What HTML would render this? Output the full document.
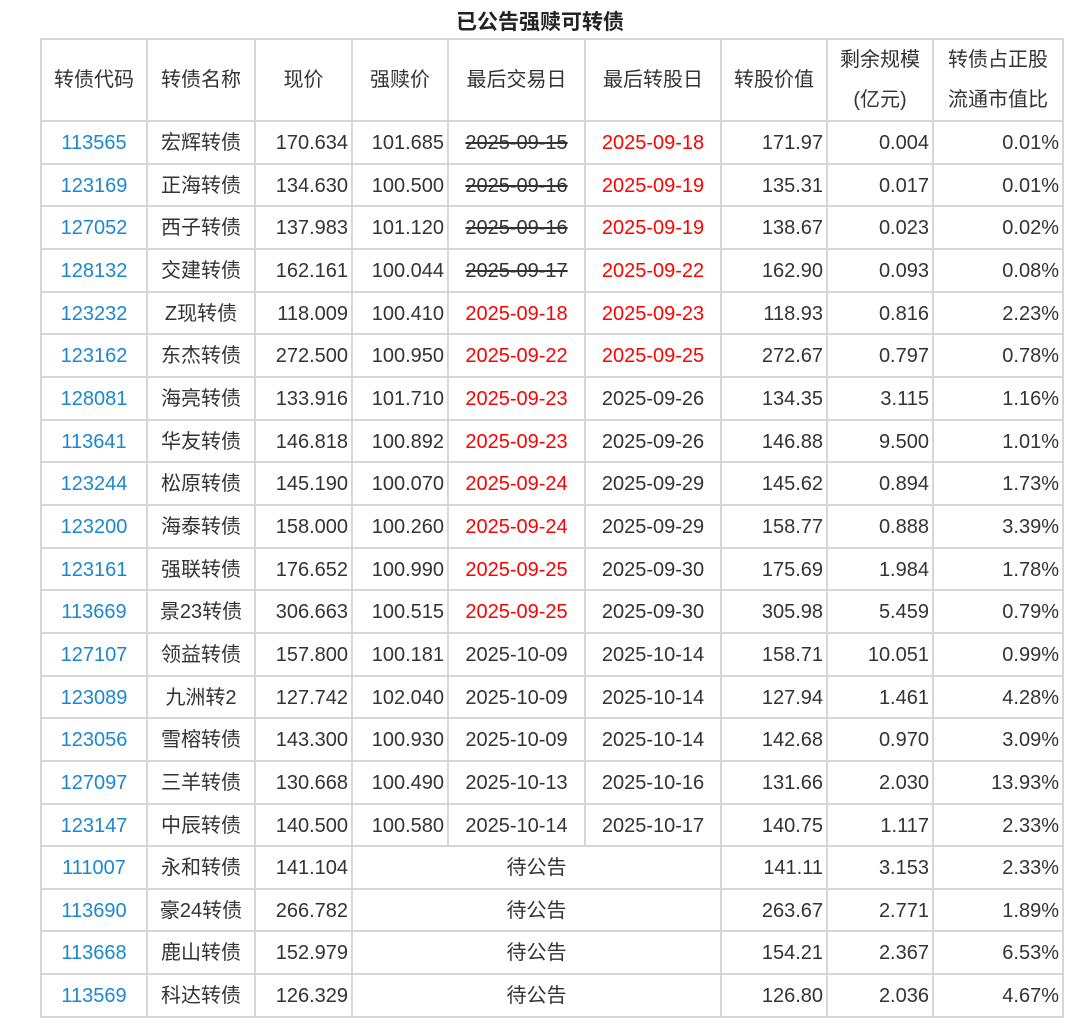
<!DOCTYPE html>
<html><head><meta charset="utf-8"><style>
body{margin:0;background:#fff;width:1080px;height:1024px;overflow:hidden;font-family:"Liberation Sans","Noto Sans CJK SC",sans-serif;color:#333}
h1{position:absolute;top:6px;left:0;width:1080px;text-align:center;margin:0;font-size:21px;font-weight:bold;color:#222}
table{position:absolute;left:40px;top:38px;border-collapse:collapse;table-layout:fixed;font-size:20px}
td,th{border:2px solid #d6d6d6;padding:0 3px;white-space:nowrap;line-height:24px}
tr{height:42.67px}
tr.h{height:80px}
th{font-weight:normal;line-height:40px;text-align:center;vertical-align:middle}
td{text-align:right;vertical-align:baseline;padding-top:9px;padding-bottom:0}
td.c{text-align:center}
.b{color:#1a88d0;text-align:center}
.r{color:#f00;text-align:center}
s{color:#333}
</style></head><body>
<h1>已公告强赎可转债</h1>
<table>
<colgroup><col style="width:106px"><col style="width:108px"><col style="width:97px"><col style="width:96px"><col style="width:137px"><col style="width:136px"><col style="width:106px"><col style="width:106px"><col style="width:130px"></colgroup>
<tr class="h"><th>转债代码</th><th>转债名称</th><th>现价</th><th>强赎价</th><th>最后交易日</th><th>最后转股日</th><th>转股价值</th><th>剩余规模<br>(亿元)</th><th>转债占正股<br>流通市值比</th></tr>
<tr><td class="b">113565</td><td class="c">宏辉转债</td><td>170.634</td><td>101.685</td><td class="c"><s>2025-09-15</s></td><td class="r">2025-09-18</td><td>171.97</td><td>0.004</td><td>0.01%</td></tr>
<tr><td class="b">123169</td><td class="c">正海转债</td><td>134.630</td><td>100.500</td><td class="c"><s>2025-09-16</s></td><td class="r">2025-09-19</td><td>135.31</td><td>0.017</td><td>0.01%</td></tr>
<tr><td class="b">127052</td><td class="c">西子转债</td><td>137.983</td><td>101.120</td><td class="c"><s>2025-09-16</s></td><td class="r">2025-09-19</td><td>138.67</td><td>0.023</td><td>0.02%</td></tr>
<tr><td class="b">128132</td><td class="c">交建转债</td><td>162.161</td><td>100.044</td><td class="c"><s>2025-09-17</s></td><td class="r">2025-09-22</td><td>162.90</td><td>0.093</td><td>0.08%</td></tr>
<tr><td class="b">123232</td><td class="c">Z现转债</td><td>118.009</td><td>100.410</td><td class="r">2025-09-18</td><td class="r">2025-09-23</td><td>118.93</td><td>0.816</td><td>2.23%</td></tr>
<tr><td class="b">123162</td><td class="c">东杰转债</td><td>272.500</td><td>100.950</td><td class="r">2025-09-22</td><td class="r">2025-09-25</td><td>272.67</td><td>0.797</td><td>0.78%</td></tr>
<tr><td class="b">128081</td><td class="c">海亮转债</td><td>133.916</td><td>101.710</td><td class="r">2025-09-23</td><td class="c">2025-09-26</td><td>134.35</td><td>3.115</td><td>1.16%</td></tr>
<tr><td class="b">113641</td><td class="c">华友转债</td><td>146.818</td><td>100.892</td><td class="r">2025-09-23</td><td class="c">2025-09-26</td><td>146.88</td><td>9.500</td><td>1.01%</td></tr>
<tr><td class="b">123244</td><td class="c">松原转债</td><td>145.190</td><td>100.070</td><td class="r">2025-09-24</td><td class="c">2025-09-29</td><td>145.62</td><td>0.894</td><td>1.73%</td></tr>
<tr><td class="b">123200</td><td class="c">海泰转债</td><td>158.000</td><td>100.260</td><td class="r">2025-09-24</td><td class="c">2025-09-29</td><td>158.77</td><td>0.888</td><td>3.39%</td></tr>
<tr><td class="b">123161</td><td class="c">强联转债</td><td>176.652</td><td>100.990</td><td class="r">2025-09-25</td><td class="c">2025-09-30</td><td>175.69</td><td>1.984</td><td>1.78%</td></tr>
<tr><td class="b">113669</td><td class="c">景23转债</td><td>306.663</td><td>100.515</td><td class="r">2025-09-25</td><td class="c">2025-09-30</td><td>305.98</td><td>5.459</td><td>0.79%</td></tr>
<tr><td class="b">127107</td><td class="c">领益转债</td><td>157.800</td><td>100.181</td><td class="c">2025-10-09</td><td class="c">2025-10-14</td><td>158.71</td><td>10.051</td><td>0.99%</td></tr>
<tr><td class="b">123089</td><td class="c">九洲转2</td><td>127.742</td><td>102.040</td><td class="c">2025-10-09</td><td class="c">2025-10-14</td><td>127.94</td><td>1.461</td><td>4.28%</td></tr>
<tr><td class="b">123056</td><td class="c">雪榕转债</td><td>143.300</td><td>100.930</td><td class="c">2025-10-09</td><td class="c">2025-10-14</td><td>142.68</td><td>0.970</td><td>3.09%</td></tr>
<tr><td class="b">127097</td><td class="c">三羊转债</td><td>130.668</td><td>100.490</td><td class="c">2025-10-13</td><td class="c">2025-10-16</td><td>131.66</td><td>2.030</td><td>13.93%</td></tr>
<tr><td class="b">123147</td><td class="c">中辰转债</td><td>140.500</td><td>100.580</td><td class="c">2025-10-14</td><td class="c">2025-10-17</td><td>140.75</td><td>1.117</td><td>2.33%</td></tr>
<tr><td class="b">111007</td><td class="c">永和转债</td><td>141.104</td><td colspan="3" class="c">待公告</td><td>141.11</td><td>3.153</td><td>2.33%</td></tr>
<tr><td class="b">113690</td><td class="c">豪24转债</td><td>266.782</td><td colspan="3" class="c">待公告</td><td>263.67</td><td>2.771</td><td>1.89%</td></tr>
<tr><td class="b">113668</td><td class="c">鹿山转债</td><td>152.979</td><td colspan="3" class="c">待公告</td><td>154.21</td><td>2.367</td><td>6.53%</td></tr>
<tr><td class="b">113569</td><td class="c">科达转债</td><td>126.329</td><td colspan="3" class="c">待公告</td><td>126.80</td><td>2.036</td><td>4.67%</td></tr>
</table>
</body></html>
